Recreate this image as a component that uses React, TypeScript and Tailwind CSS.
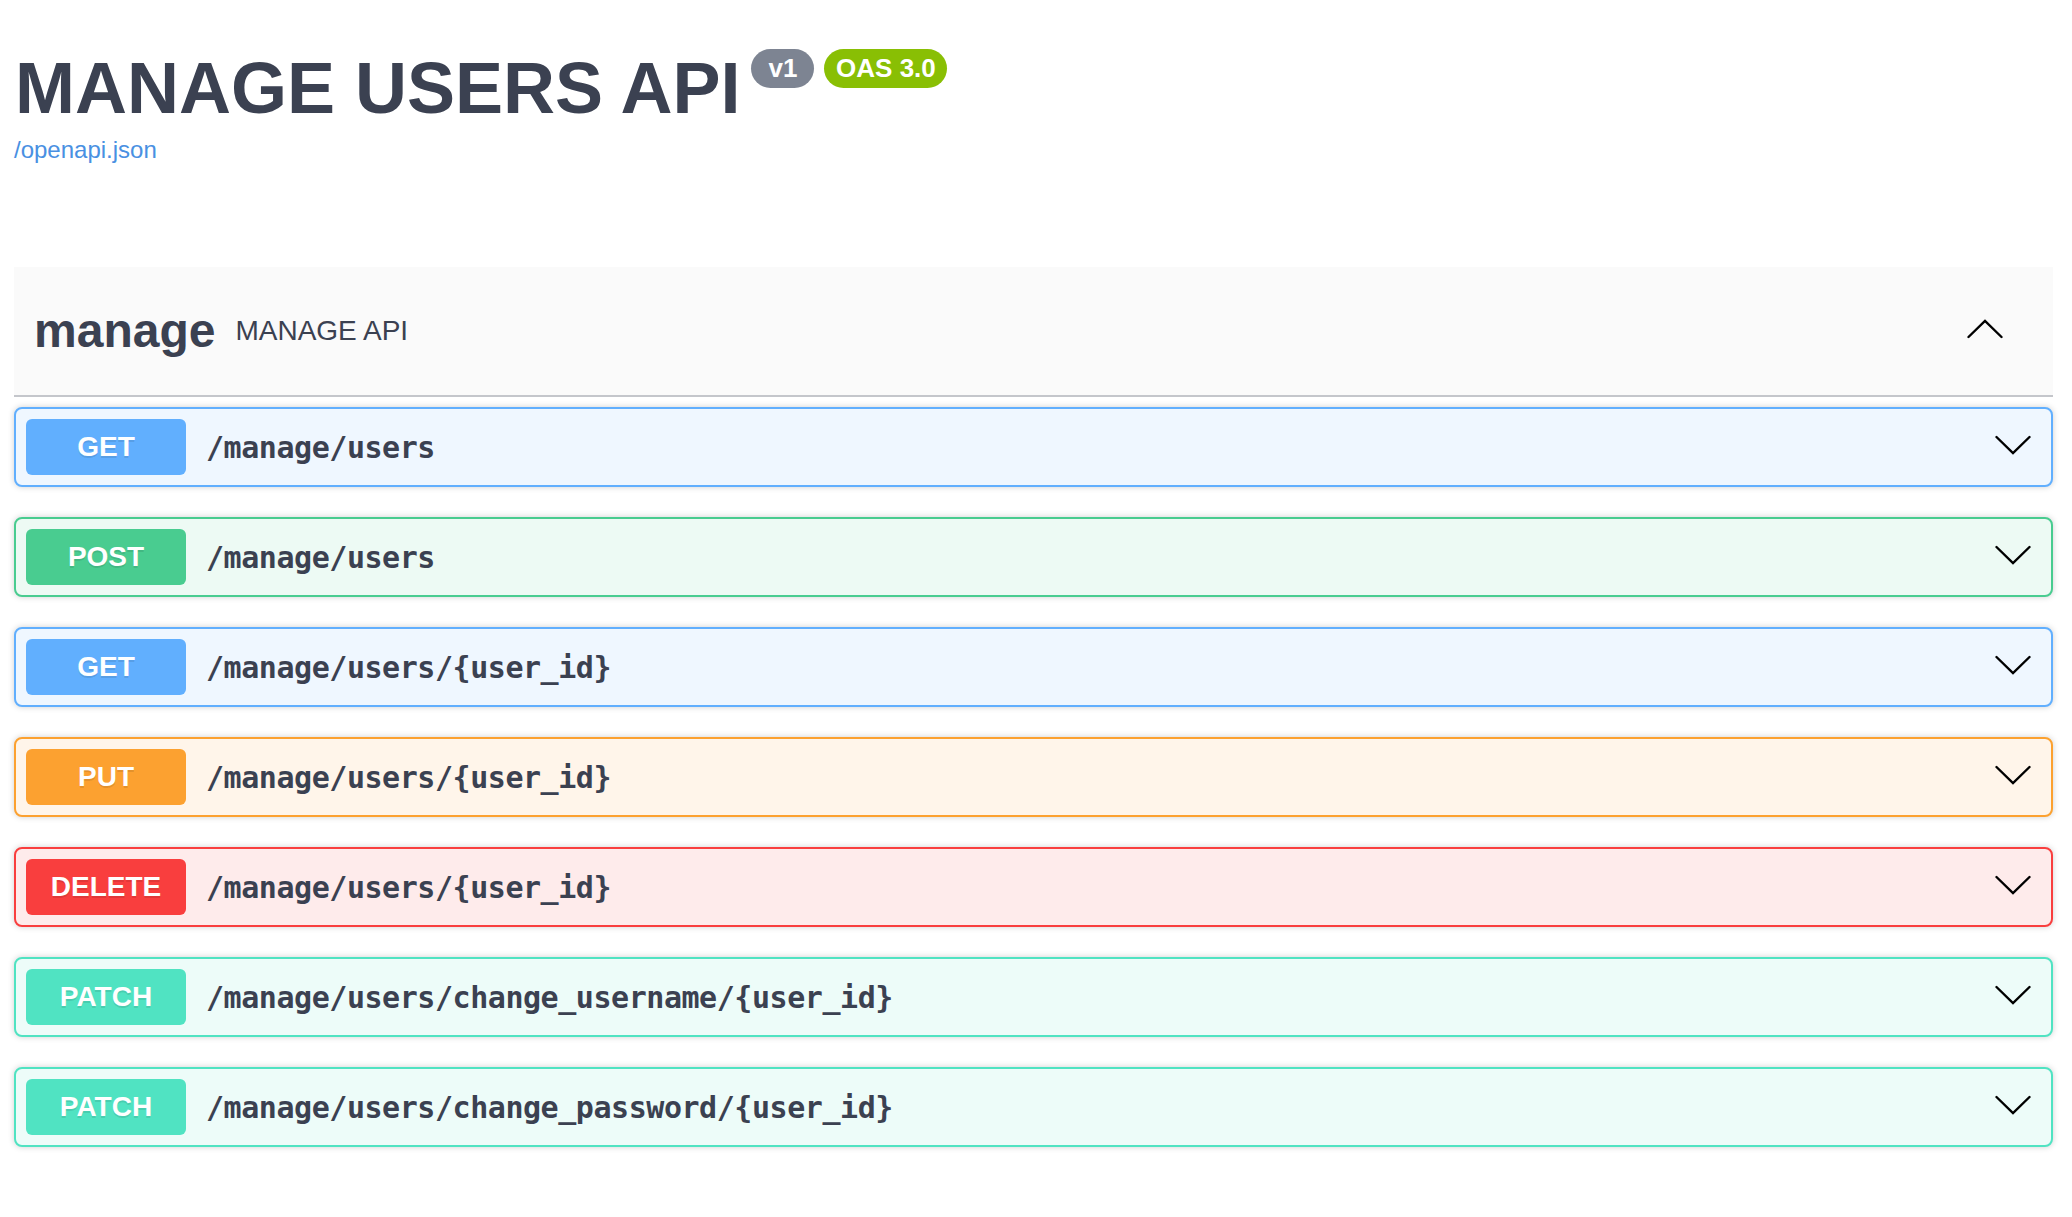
import React from "react";

type Op = { method: string; path: string; badge: string; border: string; bg: string };

const ops: Op[] = [
  { method: "GET", path: "/manage/users", badge: "bg-[#61affe]", border: "border-[#61affe]", bg: "bg-[#eff7ff]" },
  { method: "POST", path: "/manage/users", badge: "bg-[#49cc90]", border: "border-[#49cc90]", bg: "bg-[#edfaf4]" },
  { method: "GET", path: "/manage/users/{user_id}", badge: "bg-[#61affe]", border: "border-[#61affe]", bg: "bg-[#eff7ff]" },
  { method: "PUT", path: "/manage/users/{user_id}", badge: "bg-[#fca130]", border: "border-[#fca130]", bg: "bg-[#fff5ea]" },
  { method: "DELETE", path: "/manage/users/{user_id}", badge: "bg-[#f93e3e]", border: "border-[#f93e3e]", bg: "bg-[#feebeb]" },
  { method: "PATCH", path: "/manage/users/change_username/{user_id}", badge: "bg-[#50e3c2]", border: "border-[#50e3c2]", bg: "bg-[#edfcf9]" },
  { method: "PATCH", path: "/manage/users/change_password/{user_id}", badge: "bg-[#50e3c2]", border: "border-[#50e3c2]", bg: "bg-[#edfcf9]" },
];

function Chevron({ up }: { up?: boolean }) {
  return (
    <svg width="36" height="20" viewBox="0 0 36 20" className="shrink-0">
      <polyline
        points={up ? "1.5,18 18,2 34.5,18" : "1.5,2 18,18 34.5,2"}
        fill="none"
        stroke="#000"
        strokeWidth="2.4"
        strokeLinecap="round"
        strokeLinejoin="miter"
      />
    </svg>
  );
}

export default function App() {
  return (
    <div className="min-h-[1217px] bg-white pl-[14px] pr-[19px] font-['Liberation_Sans',Arial,sans-serif] text-[#3b4151]">
      <div className="flex items-start pt-[49px]">
        <h2 className="ml-[1px] mt-[3px] text-[72px] font-bold leading-[72px] text-[#3b4151]">MANAGE USERS API</h2>
        <span className="ml-[11px] flex h-[39px] w-[63px] items-center justify-center rounded-full bg-[#7d8492] text-[26px] font-bold text-white">
          v1
        </span>
        <span className="ml-[10px] flex h-[39px] w-[123px] items-center justify-center rounded-full bg-[#89bf04] text-[26px] font-bold text-white">
          OAS 3.0
        </span>
      </div>
      <a className="mt-[8px] block text-[24px] leading-[36px] text-[#4990e2]">/openapi.json</a>

      <div className="mt-[99px] flex h-[130px] items-center border-b-2 border-[#c4c6cb] bg-[#fafafa] pl-[20px] pr-[50px]">
        <span className="text-[48px] font-bold leading-none text-[#3b4151]">manage</span>
        <span className="ml-[20px] text-[28px] leading-none text-[#3b4151]">MANAGE API</span>
        <div className="flex-1" />
        <div className="-mt-[5px]">
          <Chevron up />
        </div>
      </div>

      <div className="mt-[10px] flex flex-col gap-[30px]">
        {ops.map((op, i) => (
          <div
            key={i}
            className={`flex h-[80px] items-center rounded-[8px] border-2 px-[10px] shadow-[0_0_6px_rgba(0,0,0,0.19)] ${op.border} ${op.bg}`}
          >
            <span
              className={`flex h-[56px] w-[160px] shrink-0 items-center justify-center rounded-[6px] text-[28px] font-bold text-white [text-shadow:0_2px_0_rgba(0,0,0,0.1)] ${op.badge}`}
            >
              {op.method}
            </span>
            <span className="ml-[20px] font-['DejaVu_Sans_Mono',monospace] text-[30px] font-semibold tracking-[-0.45px] text-[#3b4151]">
              {op.path}
            </span>
            <div className="flex-1" />
            <div className="mr-[10px] -mt-[5px]">
              <Chevron />
            </div>
          </div>
        ))}
      </div>
    </div>
  );
}
